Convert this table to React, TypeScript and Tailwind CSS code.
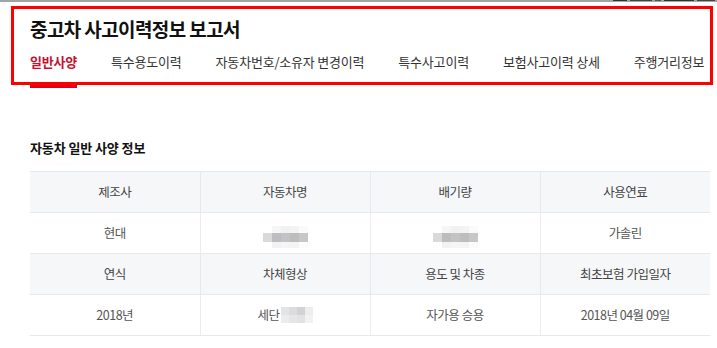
import React from "react";

const tabs = [
  "일반사양",
  "특수용도이력",
  "자동차번호/소유자 변경이력",
  "특수사고이력",
  "보험사고이력 상세",
  "주행거리정보",
];

type Cell = { text?: string; masked?: "wide" | "short" };

const rows: { head: string[]; body: Cell[] }[] = [
  {
    head: ["제조사", "자동차명", "배기량", "사용연료"],
    body: [{ text: "현대" }, { masked: "wide" }, { masked: "wide" }, { text: "가솔린" }],
  },
  {
    head: ["연식", "차체형상", "용도 및 차종", "최초보험 가입일자"],
    body: [
      { text: "2018년" },
      { text: "세단", masked: "short" },
      { text: "자가용 승용" },
      { text: "2018년 04월 09일" },
    ],
  },
];

// pixelated block standing in for hidden values
function Mosaic({ size }: { size: "wide" | "short" }) {
  if (size === "short") {
    return (
      <span className="inline-flex flex-col ml-[1px] align-middle">
        <span className="flex h-[8px]">
          <span className="w-[8px] bg-[#e4e4e6]" />
          <span className="w-[8px] bg-[#dcdcde]" />
          <span className="w-[8px] bg-[#d2d2d4]" />
          <span className="w-[8px] bg-[#ededee]" />
        </span>
        <span className="flex h-[8px]">
          <span className="w-[8px] bg-[#ececed]" />
          <span className="w-[8px] bg-[#e6e6e8]" />
          <span className="w-[8px] bg-[#e2e2e4]" />
          <span className="w-[8px] bg-[#f2f2f3]" />
        </span>
      </span>
    );
  }
  return (
    <span className="inline-flex flex-col">
      <span className="flex h-[7px] pl-[9px]">
        <span className="w-[9px] bg-[#f6f6f6]" />
        <span className="w-[9px] bg-[#f1f1f1]" />
        <span className="w-[9px] bg-[#f3f3f3]" />
        <span className="w-[9px] bg-[#fafafa]" />
      </span>
      <span className="flex h-[9px]">
        <span className="w-[9px] bg-[#d9d9da]" />
        <span className="w-[9px] bg-[#bdbdbf]" />
        <span className="w-[9px] bg-[#c3c3c5]" />
        <span className="w-[9px] bg-[#bdbdbe]" />
        <span className="w-[9px] bg-[#c7c7c9]" />
      </span>
      <span className="flex h-[6px] pl-[9px]">
        <span className="w-[9px] bg-[#f2f2f2]" />
        <span className="w-[9px] bg-[#f5f5f5]" />
        <span className="w-[9px] bg-[#f4f4f4]" />
        <span className="w-[9px] bg-[#fbfbfb]" />
      </span>
    </span>
  );
}

export default function App() {
  return (
    <div
      className="relative w-[717px] h-[348px] overflow-hidden bg-white"
      style={{ fontFamily: '"Noto Sans CJK KR", "Noto Sans", sans-serif' }}
    >
      {/* bottom edge of the bar above */}
      <div className="relative h-[2px] bg-[#a3a3a3]">
        <div className="absolute right-[2px] top-0 flex gap-[3px] h-[1px]">
          <span className="w-[14px] bg-[#333]" />
          <span className="w-[22px] bg-[#444]" />
          <span className="w-[6px] bg-[#555]" />
          <span className="w-[30px] bg-[#333]" />
          <span className="w-[18px] bg-[#444]" />
        </div>
      </div>

      <header className="pl-[30px]">
        <h1 className="h-[41px] pt-[13px] text-[19px] leading-[28px] font-bold tracking-[-0.6px] text-[#111]">
          중고차 사고이력정보 보고서
        </h1>
        <nav className="flex gap-[34px] mt-[9px] whitespace-nowrap">
          {tabs.map((t, i) => (
            <a
              key={t}
              className={
                i === 0
                  ? "shrink-0 pb-[13px] border-b-[3px] border-[#e0001b] text-[13px] leading-[20px] font-bold tracking-[-0.2px] text-[#c8102e]"
                  : "shrink-0 pb-[13px] border-b-[3px] border-transparent text-[13px] leading-[20px] tracking-[-0.2px] text-[#333]"
              }
            >
              {t}
            </a>
          ))}
        </nav>
      </header>

      {/* highlight frame around the report header */}
      <div className="absolute left-[11px] top-[6px] w-[702px] h-[79px] border-[3px] border-[#ff0000] pointer-events-none" />

      <section className="px-[30px] pt-[50px]">
        <h2 className="text-[13px] leading-[20px] font-bold tracking-[-0.1px] text-[#111]">자동차 일반 사양 정보</h2>
        <table className="mt-[13px] w-[680px] table-fixed border-collapse text-[12.5px] tracking-[-0.5px]">
          <tbody>
            {rows.map((r, ri) => (
              <React.Fragment key={ri}>
                <tr className="h-[41px] bg-[#f6f7f9]">
                  {r.head.map((h, hi) => (
                    <th
                      key={h}
                      className={
                        "font-normal text-[#444] text-center border-y border-[#e6e8eb] " +
                        (hi > 0 ? "border-l border-l-[#e6e8eb]" : "")
                      }
                    >
                      {h}
                    </th>
                  ))}
                </tr>
                <tr className="h-[41px] bg-white">
                  {r.body.map((c, ci) => (
                    <td
                      key={ci}
                      className={
                        "text-center text-[#555] border-y border-[#e6e8eb] " +
                        (ci > 0 ? "border-l border-l-[#ececee]" : "")
                      }
                    >
                      <span className="inline-flex items-center justify-center">
                        {c.text}
                        {c.masked && <Mosaic size={c.masked} />}
                      </span>
                    </td>
                  ))}
                </tr>
              </React.Fragment>
            ))}
          </tbody>
        </table>
      </section>
    </div>
  );
}
